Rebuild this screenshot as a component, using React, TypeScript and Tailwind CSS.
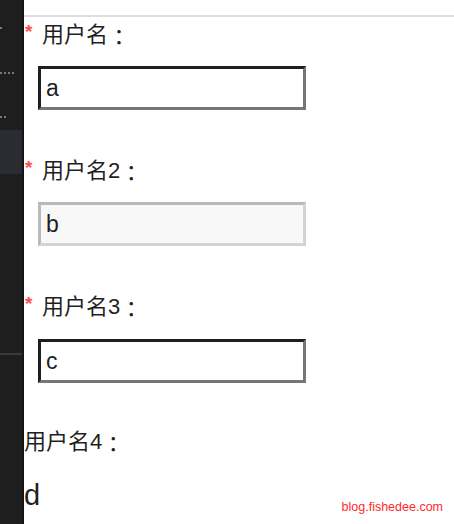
import React from "react";

const font = { fontFamily: '"Liberation Sans", "Noto Sans CJK SC", sans-serif' };
const tc = { fontFamily: '"Noto Sans CJK TC", sans-serif' };

function Label({ text, required }: { text: string; required?: boolean }) {
  return (
    <div className="flex items-start h-[28px] leading-[28px] text-[22px] text-[#1f1f1f]">
      {required && (
        <span className="w-[18px] text-[19px] leading-[22px] font-bold text-[#ff4d4f] pl-[1px]">*</span>
      )}
      <span>{text}</span>
      <span style={tc}>：</span>
    </div>
  );
}

function Field({ value, disabled }: { value: string; disabled?: boolean }) {
  return (
    <div className="pl-[14px]">
      <input
        readOnly
        value={value}
        disabled={disabled}
        className={
          disabled
            ? "block w-[268px] h-[44px] border-[3px] border-t-[#b9b9b9] border-l-[#b9b9b9] border-b-[#d3d3d3] border-r-[#d3d3d3] bg-[#f8f8f8] px-[5px] text-[23px] text-[#1f1f1f] outline-none"
            : "block w-[268px] h-[44px] border-[3px] border-t-[#1f1f1f] border-l-[#1f1f1f] border-b-[#767676] border-r-[#767676] bg-white px-[5px] text-[23px] text-[#1f1f1f] outline-none"
        }
        style={font}
      />
    </div>
  );
}

function Dots({ n }: { n: number }) {
  return (
    <div className="flex gap-[2px]">
      {Array.from({ length: n }).map((_, i) => (
        <span key={i} className="w-[2px] h-[2px] rounded-full bg-[#8e9aa6]" />
      ))}
    </div>
  );
}

export default function App() {
  return (
    <div className="flex w-[454px] h-[524px] overflow-hidden bg-white" style={font}>
      <div className="w-[24px] bg-[#1e1e1e] border-r-2 border-[#141414] flex flex-col">
        <div className="h-[27px]" />
        <Dots n={1} />
        <div className="h-[43px]" />
        <Dots n={4} />
        <div className="h-[42px]" />
        <Dots n={2} />
        <div className="h-[12px]" />
        <div className="h-[44px] bg-[#2b2b32]" />
        <div className="h-[179px]" />
        <div className="h-[2px] bg-[#3a3a3a]" />
      </div>
      <div className="flex-1 relative flex flex-col">
        <div className="h-[15px]" />
        <div className="h-[2px] bg-[#dcdde2]" />
        <div className="mt-[4px]">
          <Label text="用户名" required />
        </div>
        <div className="mt-[17px]">
          <Field value="a" />
        </div>
        <div className="mt-[47px]">
          <Label text="用户名2" required />
        </div>
        <div className="mt-[17px]">
          <Field value="b" disabled />
        </div>
        <div className="mt-[47px]">
          <Label text="用户名3" required />
        </div>
        <div className="mt-[18px]">
          <Field value="c" />
        </div>
        <div className="mt-[45px]">
          <Label text="用户名4" />
        </div>
        <div className="mt-[22px] text-[29px] leading-[34px] text-[#1f1f1f]">d</div>
        <div className="absolute right-[11px] bottom-[9px] text-[12.5px] leading-[15px] text-[#ff2a2a]">
          blog.fishedee.com
        </div>
      </div>
    </div>
  );
}
